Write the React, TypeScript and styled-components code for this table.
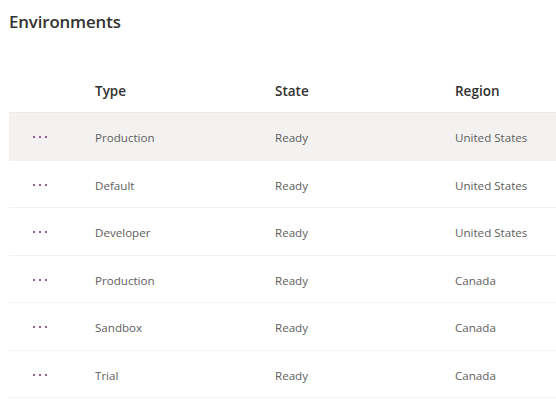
import React from "react";
import styled, { createGlobalStyle } from "styled-components";

const Global = createGlobalStyle`
  html, body { margin: 0; padding: 0; background: #ffffff; }
  body { font-family: "Open Sans", "Noto Sans", sans-serif; -webkit-font-smoothing: antialiased; }
`;

const Page = styled.div`
  padding: 10px 0 0 9px;
`;

const Title = styled.h1`
  margin: 0;
  font-size: 16.8px;
  line-height: 24px;
  font-weight: 600;
  color: #323130;
  letter-spacing: -0.1px;
`;

const Table = styled.div`
  margin-top: 36px;
  display: flex;
  flex-direction: column;
`;

const Row = styled.div<{ $header?: boolean; $selected?: boolean }>`
  display: grid;
  grid-template-columns: 86px 180px 180px 1fr;
  align-items: center;
  box-sizing: border-box;
  height: ${(p) => (p.$header ? "43px" : "47.5px")};
  border-bottom: 1px solid ${(p) => (p.$header ? "#edebe9" : "#f3f2f1")};
  background: ${(p) => (p.$selected ? "#f3f2f1" : "transparent")};
`;

const HeadCell = styled.div`
  font-size: 13.5px;
  font-weight: 600;
  color: #323130;
`;

const Cell = styled.div`
  font-size: 11.6px;
  color: #605e5c;
  padding-top: 3px;
`;

const MoreCell = styled.div`
  display: flex;
  align-items: center;
  padding-left: 24px;
  padding-top: 2px;
  height: 100%;
  box-sizing: border-box;
`;

const Dots = styled.span`
  display: inline-flex;
  gap: 4px;
  & > i {
    width: 2px;
    height: 2px;
    background: #742774;
    border-radius: 50%;
    display: block;
  }
`;

const rows = [
  { type: "Production", state: "Ready", region: "United States" },
  { type: "Default", state: "Ready", region: "United States" },
  { type: "Developer", state: "Ready", region: "United States" },
  { type: "Production", state: "Ready", region: "Canada" },
  { type: "Sandbox", state: "Ready", region: "Canada" },
  { type: "Trial", state: "Ready", region: "Canada" },
];

export default function App() {
  return (
    <Page>
      <Global />
      <Title>Environments</Title>
      <Table>
        <Row $header>
          <div />
          <HeadCell>Type</HeadCell>
          <HeadCell>State</HeadCell>
          <HeadCell>Region</HeadCell>
        </Row>
        {rows.map((r, i) => (
          <Row key={i} $selected={i === 0}>
            <MoreCell>
              <Dots>
                <i />
                <i />
                <i />
              </Dots>
            </MoreCell>
            <Cell>{r.type}</Cell>
            <Cell>{r.state}</Cell>
            <Cell>{r.region}</Cell>
          </Row>
        ))}
      </Table>
    </Page>
  );
}
